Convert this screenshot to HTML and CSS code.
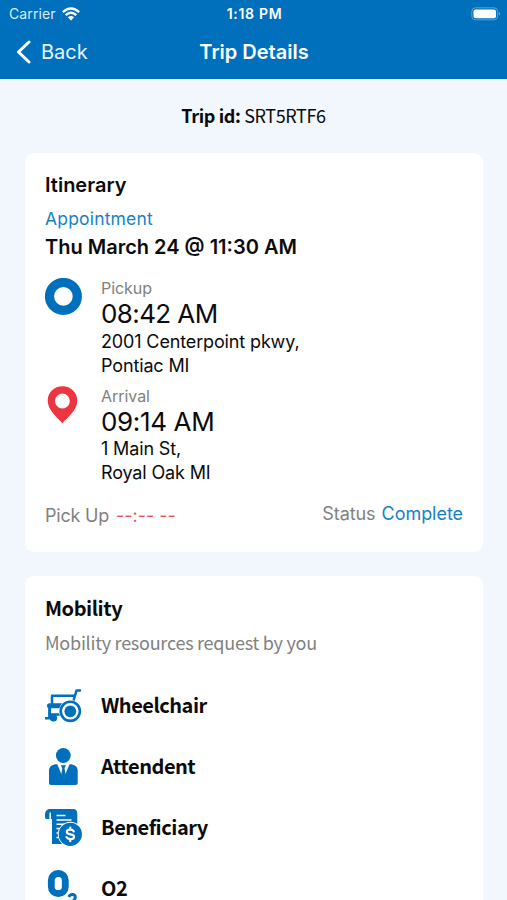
FILE: index.html
```html
<!DOCTYPE html>
<html lang="en">
<head>
<meta charset="utf-8">
<title>Trip Details</title>
<link rel="stylesheet" href="styles.css">
</head>
<body>
<header class="header">
  <div class="status-bar">
    <div class="carrier"><span>Carrier</span>
      <svg width="18" height="14" viewBox="0 0 18 14" fill="none" stroke="#fff" stroke-width="2.3"><path d="M.8 5.1Q9-2.2 17.2 5.1M3.7 8.1Q9 3.4 14.3 8.1"/><path d="M9 13.5 5.8 10.3Q9 7.8 12.2 10.3Z" fill="#fff" stroke="none"/></svg>
    </div>
    <div class="clock">1:18 PM</div>
    <svg class="battery" width="30" height="14" viewBox="0 0 30 14"><rect x=".8" y=".8" width="25.8" height="12" rx="3.6" fill="none" stroke="#5ba1d8"/><rect x="2.5" y="2.4" width="22.5" height="8.8" rx="2" fill="#fff"/><path d="M27.8 4.8q3 2 0 4z" fill="#5ba1d8"/></svg>
  </div>
  <nav class="nav">
    <div class="back"><svg width="16" height="24" viewBox="0 0 16 24" fill="none" stroke="#fff" stroke-width="3" stroke-linecap="round" stroke-linejoin="round"><path d="M14 2 3.500 12l10.500 10"/></svg><span>Back</span></div>
    <h1>Trip Details</h1>
    <div></div>
  </nav>
</header>
<main>
  <p class="trip-id"><b>Trip id:</b> SRT5RTF6</p>
  <section class="card itinerary">
    <h2>Itinerary</h2>
    <div class="appointment">Appointment</div>
    <div class="date">Thu March 24 @ 11:30 AM</div>
    <div class="stop">
      <svg width="38" height="38" viewBox="0 0 38 38"><circle cx="18.4" cy="18.4" r="13.9" fill="none" stroke="#0070bc" stroke-width="9.2"/></svg>
      <div><div class="label">Pickup</div><div class="time">08:42 AM</div><address>2001 Centerpoint pkwy,<br>Pontiac MI</address></div>
    </div>
    <div class="stop">
      <svg width="38" height="38" viewBox="0 0 38 38"><path fill="#ed3542" fill-rule="evenodd" d="M17.4.2C9 .2 2.7 6.500 2.7 14.7c0 9 9 16.300 14.700 22.500 5.700-6.200 14.900-13.500 14.900-22.500C32.300 6.500 25.800.2 17.400.2Zm0 7.400a7.400 7.400 0 1 1 0 14.800 7.400 7.400 0 0 1 0-14.800Z"/></svg>
      <div><div class="label arrival-label">Arrival</div><div class="time arrival-time">09:14 AM</div><address>1 Main St,<br>Royal Oak MI</address></div>
    </div>
    <div class="summary">
      <div class="actual">Pick Up <span>--:-- --</span></div>
      <div class="status">Status <span>Complete</span></div>
    </div>
  </section>
  <section class="card mobility">
    <h2>Mobility</h2>
    <p>Mobility resources request by you</p>
    <ul>
      <li>
        <svg width="38" height="38" viewBox="0 -1 38 38" fill="none" stroke="#0070bc" stroke-linejoin="round"><path stroke-width="2.500" stroke-linecap="round" d="M7 7.800H29M35 2.500H31.500L27.500 16M7 7.800V16"/><path stroke-width="3" d="M4.600 16.800V30"/><path stroke-width="5" stroke-linecap="round" d="M4.500 17.700H22"/><path stroke-width="2.600" d="M0 30.300H7"/><circle cx="8.500" cy="30" r="3.600" fill="#0070bc" stroke="none"/><path stroke-width="2.600" d="M6 26.500H18"/><circle cx="25.300" cy="23.300" r="11.300" fill="#fff" stroke="none"/><circle cx="25.300" cy="23.300" r="9.600" stroke-width="2.600"/><circle cx="25.300" cy="23.300" r="5.900" fill="#0070bc" stroke="none"/></svg>
        <span>Wheelchair</span></li>
      <li>
        <svg width="38" height="38" viewBox="0 0 38 38" fill="#0070bc"><circle cx="18.300" cy="7.500" r="7.400"/><path d="M4 37V22.500c0-4 3-6.300 8-6.300H24.500c5 0 8.200 2.300 8.200 6.300V35c0 1.300-.8 2-2.200 2H6c-1.300 0-2-.7-2-2Z"/><path fill="#fff" d="m12.200 16 6.200 15 6.200-15Z"/><path d="M15.800 17.300h5.200l-1.500 2.900 1.200 6.800-2.300 4.700-2.300-4.700 1.200-6.800Z"/></svg>
        <span>Attendent</span></li>
      <li>
        <svg width="38" height="38" viewBox="0 0 38 38"><path fill="#0070bc" d="M5 0H28c3 0 4.300 2 4.300 4.500V31l-3 4H7V10H1.500C0 10 0 8.500 0 5.500 0 2.500 1.800 0 5 0Z"/><path fill="none" stroke="#fff" stroke-width="1.500" d="M5.200 3.500V10.500M11.500 6.500h9M11.500 10.900h15M11.500 15.300h9M11.500 19.600h5M11.500 24h3M11.500 28.400h4"/><circle cx="25.300" cy="25.300" r="12.500" fill="#fff"/><circle cx="25.300" cy="25.300" r="11.600" fill="#0070bc"/><path fill="none" stroke="#fff" stroke-width="2.200" stroke-linecap="round" d="M28.800 22.400c-.7-1.300-2-1.700-3.500-1.700-2 0-3.500.8-3.500 2.300 0 3.600 7.300 1.200 7.300 4.700 0 1.500-1.600 2.400-3.800 2.400-1.800 0-3.200-.7-3.900-2M25.300 18.700v2M25.300 30.200v2"/></svg>
        <span>Beneficiary</span></li>
      <li>
        <svg width="38" height="38" viewBox="0 0 38 38" fill="none" stroke="#0070bc"><rect x="6.300" y="3.500" width="14" height="20" rx="6.800" stroke-width="6.800"/><path stroke-width="3" d="M24 27c1-3.600 6.300-3.300 6.300.3 0 2.700-3 4.500-6 7.700h7"/></svg>
        <span>O2</span></li>
    </ul>
  </section>
</main>
</body>
</html>
```
FILE: styles.css
```css
* { box-sizing: border-box; }
html, body { height: 900px; overflow: hidden; }
body { margin: 0; background: #f1f7fd; color: #0b0b0d; font-family: Inter, "Liberation Sans", sans-serif; }
h1, h2, p, ul { margin: 0; padding: 0; }
svg { display: block; flex: none; }
.header { height: 79px; background: #0070bc; color: #fff; }
.status-bar { height: 27px; padding: 0 6px 0 9px; display: grid; grid-template-columns: 1fr auto 1fr; align-items: center; }
.carrier { display: flex; align-items: center; gap: 6px; color: #d9edf9; font-size: 14px; letter-spacing: .1px; }
.clock { padding-right: 1px; font-size: 14px; font-weight: 600; letter-spacing: .7px; }
.battery { justify-self: end; }
.nav { height: 50px; padding: 0 15px; display: grid; grid-template-columns: 1fr auto 1fr; align-items: center; }
.back { display: flex; align-items: center; gap: 10px; font-size: 20px; color: #e8f5fd; }
h1 { padding-left: 1px; font-size: 20px; font-weight: 600; }
.trip-id { height: 74px; text-align: center; font: 18px/72px "Noto Sans CJK JP", sans-serif; letter-spacing: -.38px; }
.card { margin: 0 24px 24px 25px; padding: 20px; background: #fff; border-radius: 9px; }
.itinerary { height: 399px; }
.mobility { height: 324px; margin-bottom: 0; padding-bottom: 0; border-radius: 9px 9px 0 0; overflow: hidden; font-family: "Noto Sans CJK JP", sans-serif; }
h2 { font-size: 20px; font-weight: 600; line-height: 24px; }
.mobility h2 { letter-spacing: -.45px; }
.appointment { margin-top: 9px; line-height: 25px; font-size: 17.500px; letter-spacing: .18px; color: #1681c5; }
.date { margin-top: 3px; line-height: 26px; font-size: 20px; font-weight: 600; }
.stop { height: 108px; display: flex; gap: 18px; }
.stop > svg { margin-top: 1px; }
.date + .stop { margin-top: 17px; }
.label { font-size: 16px; line-height: 22px; letter-spacing: -.05px; color: #818181; }
.time { margin-top: -1px; font-size: 26px; line-height: 32px; letter-spacing: -.6px; }
.arrival-label { line-height: 20px; margin-top: 1px; }
.arrival-time { letter-spacing: -.35px; }
.arrival-time + address { margin-top: -1px; }
.arrival-label + .time { margin-top: 0; }
address { font-size: 18px; line-height: 24px; font-style: normal; letter-spacing: -.14px; }
.summary { display: flex; justify-content: space-between; color: #818181; font-size: 18px; line-height: 24px; letter-spacing: -.05px; }
.actual { margin-top: 11px; letter-spacing: -.2px; }
.actual span { color: #ed5660; margin-left: 2px; letter-spacing: 0; }
.status { margin-top: 9px; }
.status span { color: #1681c5; margin-left: 1px; }
.mobility p { margin-top: 10px; font-size: 18px; line-height: 24px; letter-spacing: -.25px; color: #818181; }
ul { margin-top: 21px; list-style: none; }
li { height: 61px; display: flex; align-items: center; gap: 18px; font-size: 20px; line-height: 20px; font-weight: 600; letter-spacing: -.48px; }
li span { margin-top: -2px; }
```
